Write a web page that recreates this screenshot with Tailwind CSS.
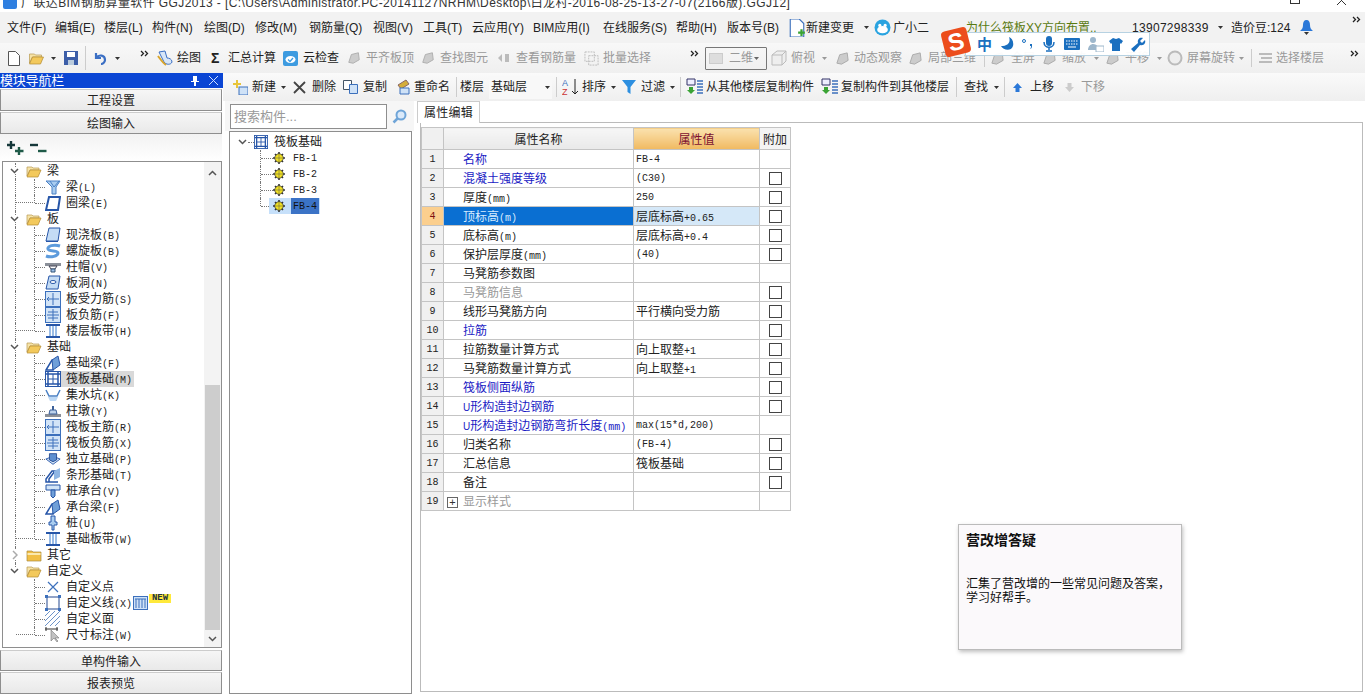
<!DOCTYPE html>
<html lang="zh">
<head>
<meta charset="utf-8">
<script src="https://cdn.jsdelivr.net/npm/@tailwindcss/browser@4"></script>
<title>GGJ2013</title>
</head>
<body class="relative w-[1365px] h-[697px] overflow-hidden bg-white text-[12px] leading-none text-[#222] font-['Liberation_Sans','Noto_Sans_CJK_SC',sans-serif]">
<svg width="0" height="0" class="absolute">
<defs>
<symbol id="fo" viewBox="0 0 16 14"><path d="M1 3h5l1 1h6v2H4L1 12z" fill="#f6e3a8" stroke="#b89a50" stroke-width=".7"/><path d="M4 6h11l-3 7H1z" fill="#f3c95c" stroke="#b18a30" stroke-width=".7"/></symbol>
<symbol id="fc" viewBox="0 0 16 14"><path d="M1 3h5l1 1h8v9H1z" fill="#f2bf45" stroke="#a98a40" stroke-width=".7"/><path d="M1.500 5h13v2h-13z" fill="#fbe9ae"/></symbol>
<symbol id="beam" viewBox="0 0 16 16"><path d="M1 2h14l-4 6v7H7V8z" fill="#a9cdf0" stroke="#4a80c4"/><path d="M5 2l4 6 5-6" fill="none" stroke="#4a80c4"/></symbol>
<symbol id="ring" viewBox="0 0 16 16"><path d="M4 2h11l-2 13H1z" fill="#fff" stroke="#2756a8" stroke-width="2"/></symbol>
<symbol id="slab" viewBox="0 0 16 16"><path d="M4 1h11l-2 13H1z" fill="#c4dcf5" stroke="#2756a8"/><path d="M1 14h12v1H1z" fill="#2756a8"/></symbol>
<symbol id="spiral" viewBox="0 0 16 16"><path d="M15 3C9 1 2 3 3 6c1 3 10 1 10 4s-7 5-12 3" fill="none" stroke="#5d9bdc" stroke-width="3"/></symbol>
<symbol id="cap" viewBox="0 0 16 16"><path d="M0 4h16v3H0z" fill="#8a8f98"/><path d="M4 7h8l-2 3H6z" fill="#fff" stroke="#445"/><path d="M6 10h4v3H6z" fill="#9cc0ea" stroke="#357"/></symbol>
<symbol id="hole" viewBox="0 0 16 16"><path d="M4 1h11l-2 13H1z" fill="#c4dcf5" stroke="#2756a8"/><ellipse cx="8" cy="7" rx="3" ry="1.500" fill="#fff" stroke="#2756a8"/></symbol>
<symbol id="g1" viewBox="0 0 16 16"><rect x=".5" y=".5" width="15" height="15" fill="#d2e4f7" stroke="#3c70bc"/><path d="M8 2v12M2 8h12M4 6l-2 2 2 2" fill="none" stroke="#3c70bc"/></symbol>
<symbol id="g2" viewBox="0 0 16 16"><rect x=".5" y=".5" width="15" height="15" fill="#d2e4f7" stroke="#3c70bc"/><path d="M8 2v12M2 8h12M3 5h10M3 11h10" fill="none" stroke="#3c70bc"/></symbol>
<symbol id="band" viewBox="0 0 16 16"><path d="M1 2h14M1 14h14" stroke="#2756a8" stroke-width="2"/><path d="M5 3v10M8 3v10M11 3v10" stroke="#7aa7de" stroke-width="1.500"/></symbol>
<symbol id="fbeam" viewBox="0 0 16 16"><path d="M1 15L7 5h4l-3 10z" fill="#fff" stroke="#2756a8" stroke-width="1.500"/><path d="M7 5l6-4 2 9-7 5z" fill="#6f9fd8" stroke="#2756a8"/></symbol>
<symbol id="raft" viewBox="0 0 16 16"><rect x=".5" y=".5" width="15" height="15" fill="#fff" stroke="#2756a8"/><path d="M3 1v14M13 1v14M1 3h14M1 13h14" stroke="#2756a8" stroke-width="1.500"/><path d="M8 3v10M3 8h10" stroke="#2756a8"/></symbol>
<symbol id="pit" viewBox="0 0 16 16"><path d="M1 3l3 6h8l3-6" fill="none" stroke="#4a80c4" stroke-width="1.500"/><path d="M3 10h10l-2 4H5z" fill="#bcd8f5"/></symbol>
<symbol id="pier" viewBox="0 0 16 16"><path d="M0 11h16v3H0z" fill="#8a8f98"/><path d="M5 7h6l1 4H4z" fill="#bcd2ec" stroke="#3c6099"/><path d="M7 3h2v4H7z" fill="#3c6099"/></symbol>
<symbol id="iso" viewBox="0 0 18 16"><path d="M1 8l8-3 8 3-8 6z" fill="#d2e4f7" stroke="#2756a8"/><path d="M5 2h8v7l-4 2-4-2z" fill="#5d8fd0" stroke="#24498f"/></symbol>
<symbol id="strip" viewBox="0 0 16 16"><path d="M1 15v-3L7 4h3L4 12v3zM1 15h12" fill="#fff" stroke="#2756a8" stroke-width="1.500"/><path d="M9 4l6-3v9l-6 3z" fill="#8fb6e4"/></symbol>
<symbol id="cap2" viewBox="0 0 16 16"><path d="M1 2h14v5H1z" fill="#d2e4f7" stroke="#2756a8"/><path d="M6 7h4v6l-2 2-2-2z" fill="#6f9fd8" stroke="#2756a8"/></symbol>
<symbol id="pile" viewBox="0 0 16 16"><path d="M6 1h4v6h2v3H9v5H7v-5H4V7h2z" fill="#a9cdf0" stroke="#2756a8"/></symbol>
<symbol id="x" viewBox="0 0 16 16"><path d="M3 3l10 10M13 3L3 13" stroke="#3c70bc" stroke-width="1.200"/></symbol>
<symbol id="line" viewBox="0 0 16 16"><rect x="2" y="2" width="12" height="12" fill="none" stroke="#24498f"/><path d="M0 0h3v3H0zM13 0h3v3h-3zM0 13h3v3H0zM13 13h3v3h-3z" fill="#3c70bc"/></symbol>
<symbol id="hatch" viewBox="0 0 16 16"><path d="M0 5L5 0M0 10L10 0M0 15L15 0M5 15L15 5M10 15l5-5" stroke="#6d93c8"/></symbol>
<symbol id="dim" viewBox="0 0 16 16"><path d="M0 2h13M1 0v4M12 0v4" stroke="#333"/><path d="M6 3v11l3-3 3 4 1-1-3-3h4z" fill="#c2c2c2" stroke="#777" stroke-width=".6"/></symbol>
<symbol id="gear" viewBox="0 0 12 12"><path d="M6 0v12M0 6h12M2 2l8 8M10 2l-8 8" stroke="#333" stroke-width="1.600"/><circle cx="6" cy="6" r="4.200" fill="#f0e020" stroke="#333" stroke-width=".8"/><path d="M3.500 6h5M6 3.500v5" stroke="#555" stroke-dasharray="1 1"/></symbol>
<symbol id="dn" viewBox="0 0 5 3"><path d="M0 0h5L2.500 3z" fill="currentColor"/></symbol>
<symbol id="more" viewBox="0 0 9 7"><path d="M1 1l2.500 2.500L1 6M5 1l2.500 2.500L5 6" fill="none" stroke="#222" stroke-width="1.300"/></symbol>
<symbol id="chev" viewBox="0 0 9 6"><path d="M1 1l3.500 3.500L8 1" fill="none" stroke="#555" stroke-width="1.500"/></symbol>
<symbol id="grey" viewBox="0 0 16 16"><path d="M2 13l3-9 8-2 1 8-7 4z" fill="#ccc" stroke="#aaa"/></symbol>
<symbol id="list" viewBox="0 0 18 18"><path d="M1 1h8v6H1z" fill="#eef" stroke="#336"/><path d="M3 9h4v3h2l-4 4-4-4h2z" fill="#3aa335"/><path d="M11 3h6M11 6h6M11 9h6M11 12h6M11 15h6" stroke="#3c70bc" stroke-width="1.500"/></symbol>
</defs>
</svg>

<header class="relative h-[12px] bg-white overflow-hidden">
  <div class="flex items-start -mt-[6px] h-[18px]">
    <span class="ml-[3px] mt-[1px] w-[14px] h-[14px] rounded-[2px] bg-[#2f7fe0]"></span>
    <span class="ml-[4px] text-[12px] leading-[18px] text-[#333] whitespace-nowrap tracking-[0.4px]">广联达BIM钢筋算量软件 GGJ2013 - [C:\Users\Administrator.PC-20141127NRHM\Desktop\白龙村-2016-08-25-13-27-07(2166版).GGJ12]</span>
  </div>
  <span class="absolute left-[1290px] -top-[6px] w-[10px] h-[10px] border border-[#333]"></span>
  <svg class="absolute left-[1337px] -top-[4px]" width="9" height="9"><path d="M0 0l9 9M9 0L0 9" stroke="#333"/></svg>
</header>

<nav class="flex items-center h-[31px] bg-[#f2f2f2] whitespace-nowrap">
  <span class="ml-[7px] w-[48px]">文件(F)</span><span class="w-[49px]">编辑(E)</span><span class="w-[48px]">楼层(L)</span><span class="w-[52px]">构件(N)</span><span class="w-[51px]">绘图(D)</span><span class="w-[54px]">修改(M)</span><span class="w-[64px]">钢筋量(Q)</span><span class="w-[50px]">视图(V)</span><span class="w-[49px]">工具(T)</span><span class="w-[61px]">云应用(Y)</span><span class="w-[70px]">BIM应用(I)</span><span class="w-[73px]">在线服务(S)</span><span class="w-[51px]">帮助(H)</span><span class="w-[61px]">版本号(B)</span>
  <svg class="w-[18px] h-[18px]" viewBox="0 0 16 16"><path d="M2 0h8l4 4v12H2z" fill="#fff" stroke="#3c70bc"/><path d="M9 11h2V9h2v2h2v2h-2v2h-2v-2H9z" fill="#3aa335"/></svg>
  <span class="w-[58px]">新建变更</span>
  <svg class="w-[5px] h-[3px] text-[#333]"><use href="#dn"/></svg>
  <svg class="ml-[5px] w-[17px] h-[17px]" viewBox="0 0 16 16"><circle cx="8" cy="8" r="7.500" fill="#29a3e0"/><ellipse cx="8" cy="10" rx="5" ry="3.500" fill="#fff"/><circle cx="5.500" cy="6" r="1.500" fill="#fff"/><circle cx="10.500" cy="6" r="1.500" fill="#fff"/></svg>
  <span class="ml-[2px] w-[73px]">广小二</span>
  <span class="w-[166px] text-[#5a7a10]">为什么筏板XY方向布置..</span>
  <span class="w-[86px] tracking-[0.3px]">13907298339</span>
  <svg class="w-[5px] h-[3px] text-[#333]"><use href="#dn"/></svg>
  <span class="ml-[8px] w-[69px]">造价豆:124</span>
  <svg class="w-[13px] h-[15px]" viewBox="0 0 13 15"><path d="M6.500 0C4 0 3 2 3 5c0 3-1 4-3 6h13c-2-2-3-3-3-6 0-3-1-5-3.500-5z" fill="#2b78d8"/><path d="M4 12h5l-2.500 3z" fill="#333"/></svg>
  <svg class="ml-[39px] -mt-[16px] w-[9px] h-[7px]"><use href="#more"/></svg>
</nav>

<div class="flex items-center h-[30px] bg-gradient-to-b from-[#f8f8f8] to-[#efefef] whitespace-nowrap text-[#999]">
  <span class="ml-[8px] w-[20px]"><svg class="w-[12px] h-[15px]" viewBox="0 0 12 15"><path d="M.5.500h7l4 4v10H.5z" fill="#fff" stroke="#555"/></svg></span>
  <span class="w-[23px]"><svg class="w-[17px] h-[14px]" viewBox="0 0 16 14"><use href="#fo"/></svg></span>
  <span class="w-[13px] text-[#333]"><svg class="block w-[5px] h-[3px]"><use href="#dn"/></svg></span>
  <span class="w-[21px]"><svg class="w-[14px] h-[14px]" viewBox="0 0 14 14"><path d="M0 0h14v14H0z" fill="#3c5ea8"/><path d="M3 1h8v5H3z" fill="#fff"/><path d="M4 9h6v5H4z" fill="#bcd"/></svg></span>
  <span class="w-[8px] h-[24px]"><span class="block w-px h-full bg-[#ccc]"></span></span>
  <span class="w-[22px]"><svg class="w-[14px] h-[13px]" viewBox="0 0 14 13"><path d="M3 1v5h5M3 6c3-4 9-3 9 2 0 2-2 4-4 4" fill="none" stroke="#3b6fc4" stroke-width="2.200"/></svg></span>
  <span class="w-[25px] text-[#333]"><svg class="block w-[5px] h-[3px]"><use href="#dn"/></svg></span>
  <span class="w-[17px] -mt-[10px]"><svg class="w-[9px] h-[7px]"><use href="#more"/></svg></span>
  <span class="w-[20px]"><svg class="w-[16px] h-[16px]" viewBox="0 0 16 16"><path d="M2 2l6-1 2 7c2 0 5 1 5 4-1 3-6 3-8 0z" fill="#d8e6f7" stroke="#3b6fc4"/><path d="M1 6c3 4 5 7 8 9" stroke="#d9a52c" stroke-width="2" fill="none"/></svg></span>
  <span class="w-[34px] text-[#222]">绘图</span>
  <span class="w-[17px] text-[#222] font-bold text-[14px]">Σ</span>
  <span class="w-[55px] text-[#222]">汇总计算</span>
  <span class="w-[20px]"><svg class="w-[15px] h-[15px]" viewBox="0 0 15 15"><rect width="15" height="15" rx="2" fill="#3d9be0"/><ellipse cx="7.500" cy="8.500" rx="5" ry="3.500" fill="#fff"/><path d="M5 8.500l2 2 3-3.500" fill="none" stroke="#3d9be0" stroke-width="1.300"/></svg></span>
  <span class="w-[44px] text-[#222]">云检查</span>
  <span class="w-[19px]"><svg class="w-[14px] h-[14px]"><use href="#grey"/></svg></span><span class="w-[55px]">平齐板顶</span>
  <span class="w-[19px]"><svg class="w-[14px] h-[14px]"><use href="#grey"/></svg></span><span class="w-[57px]">查找图元</span>
  <span class="w-[19px]"><svg class="w-[13px] h-[10px]" viewBox="0 0 13 10"><path d="M1 5l4-4v8zM8 1v8h4V1z" fill="#bbb"/></svg></span><span class="w-[68px]">查看钢筋量</span>
  <span class="w-[19px]"><svg class="w-[15px] h-[15px]" viewBox="0 0 16 16"><path d="M1 1h10v10H1zM5 5h10v10H5z" fill="none" stroke="#bbb" stroke-dasharray="2 1"/></svg></span><span class="w-[87px]">批量选择</span>
  <span class="w-[15px] -mt-[10px]"><svg class="w-[9px] h-[7px]"><use href="#more"/></svg></span>
  <span class="flex items-center w-[62px] h-[23px] border border-[#777] rounded-[1px]"><span class="ml-[3px] w-[14px] h-[11px] bg-[#ddd] border border-[#ccc]"></span><span class="ml-[6px] w-[25px]">二维</span><svg class="w-[5px] h-[3px] text-[#666]"><use href="#dn"/></svg></span>
  <span class="ml-[4px] w-[20px]"><svg class="w-[16px] h-[16px]" viewBox="0 0 16 16"><path d="M1 5l5-4h9v10l-4 4H1z" fill="#eee" stroke="#bbb"/><path d="M1 5h10v10M11 5l4-4" fill="none" stroke="#bbb"/></svg></span>
  <span class="w-[31px]">俯视</span>
  <span class="w-[13px]"><svg class="block w-[5px] h-[3px]"><use href="#dn"/></svg></span>
  <span class="w-[19px]"><svg class="w-[15px] h-[15px]"><use href="#grey"/></svg></span><span class="w-[54px]">动态观察</span>
  <span class="w-[20px]"><svg class="w-[15px] h-[15px]"><use href="#grey"/></svg></span><span class="w-[56px]">局部三维</span>
  <span class="w-[6px] h-[18px]"><span class="block w-px h-full bg-[#ccc]"></span></span>
  <span class="w-[21px]"><svg class="w-[15px] h-[15px]"><use href="#grey"/></svg></span><span class="w-[31px]">全屏</span>
  <span class="w-[20px]"><svg class="w-[15px] h-[15px]"><use href="#grey"/></svg></span><span class="w-[32px]">缩放</span>
  <span class="w-[11px]"><svg class="block w-[5px] h-[3px]"><use href="#dn"/></svg></span>
  <span class="w-[20px]"><svg class="w-[15px] h-[15px]"><use href="#grey"/></svg></span><span class="w-[32px]">平移</span>
  <span class="w-[10px]"><svg class="block w-[5px] h-[3px]"><use href="#dn"/></svg></span>
  <span class="w-[20px]"><svg class="w-[16px] h-[16px]" viewBox="0 0 16 16"><circle cx="8" cy="8" r="6.500" fill="#eee" stroke="#bbb" stroke-width="2"/></svg></span>
  <span class="w-[52px]">屏幕旋转</span>
  <span class="w-[12px]"><svg class="block w-[5px] h-[3px]"><use href="#dn"/></svg></span>
  <span class="w-[7px] h-[18px]"><span class="block w-px h-full bg-[#ccc]"></span></span>
  <span class="w-[18px]"><svg class="w-[15px] h-[13px]" viewBox="0 0 15 13"><path d="M1 2h13M3 6h11M1 10h13" stroke="#bbb" stroke-width="2"/></svg></span><span class="w-[74px]">选择楼层</span>
  <span class="-mt-[10px]"><svg class="w-[9px] h-[7px]"><use href="#more"/></svg></span>
</div>

<div class="flex h-[624px]">
  <aside class="w-[223px] shrink-0 flex flex-col">
    <div class="flex items-center h-[15px] bg-[#0a45d4] text-white text-[13px] tracking-[-0.2px]">
      <span class="flex-1">模块导航栏</span>
      <svg class="w-[8px] h-[10px] mr-[10px]" viewBox="0 0 8 10"><path d="M2 0h4v5h2v1H5v4H3V6H0V5h2z" fill="#fff"/></svg>
      <svg class="w-[9px] h-[9px] mr-[5px]" viewBox="0 0 9 9"><path d="M0 0l9 9M9 0L0 9" stroke="#cfe0ff"/></svg>
    </div>
    <div class="mt-px flex items-center justify-center h-[22px] pt-[2px] w-[222px] bg-gradient-to-b from-[#f6f6f6] to-[#e9e9e9] border border-[#8e8e8e] border-t-[#ccc]">工程设置</div>
    <div class="mt-px flex items-center justify-center h-[22px] pt-[2px] w-[222px] bg-gradient-to-b from-[#f6f6f6] to-[#e9e9e9] border border-[#8e8e8e] border-t-[#ccc]">绘图输入</div>
    <div class="flex items-center h-[27px] w-[222px] bg-gradient-to-b from-[#f2f2f2] to-white">
      <svg class="ml-[7px] w-[17px] h-[16px]" viewBox="0 0 17 16"><path d="M4 1v8M0 5h8" stroke="#16383a" stroke-width="2.400"/><path d="M12 7v8M8 11h8.500" stroke="#1f5a48" stroke-width="2.400"/></svg>
      <svg class="ml-[6px] w-[17px] h-[16px]" viewBox="0 0 17 16"><path d="M0 5h8" stroke="#16383a" stroke-width="2.400"/><path d="M8 11h8.500" stroke="#1f5a48" stroke-width="2.400"/></svg>
    </div>
    <div class="relative ml-[2px] w-[220px] h-[487px] border border-[#8e8e8e] bg-white overflow-hidden">
      <div class="pt-[1px] font-['Liberation_Mono','Noto_Sans_CJK_SC',monospace]">

        <div class="flex items-center h-4"><span class="relative w-[23px] h-full"><span class="absolute left-[12px] top-0 h-full border-l border-dotted border-[#777]"></span><svg class="absolute left-[7px] top-[5px] w-[9px] h-[6px] bg-white"><use href="#chev"/></svg></span><svg class="w-[16px] h-[14px]"><use href="#fo"/></svg><span class="ml-[5px] pt-[2px]">梁</span></div>
        <div class="flex items-center h-4"><span class="w-[13px] h-full border-r border-dotted border-[#777]"></span><span class="w-[19px] h-full border-r border-dotted border-[#777]"></span><span class="w-[10px] border-t border-dotted border-[#777]"></span><svg class="w-[16px] h-[16px]"><use href="#beam"/></svg><span class="ml-[5px] pt-[2px]">梁<span class="text-[10px]">(L)</span></span></div>
        <div class="flex items-center h-4"><span class="w-[13px] h-full border-r border-dotted border-[#777]"></span><span class="w-[19px] h-1/2 self-start border-r border-b border-dotted border-[#777]"></span><span class="w-[10px] border-t border-dotted border-[#777]"></span><svg class="w-[16px] h-[16px]"><use href="#ring"/></svg><span class="ml-[5px] pt-[2px]">圈梁<span class="text-[10px]">(E)</span></span></div>

        <div class="flex items-center h-4"><span class="relative w-[23px] h-full"><span class="absolute left-[12px] top-0 h-full border-l border-dotted border-[#777]"></span><svg class="absolute left-[7px] top-[5px] w-[9px] h-[6px] bg-white"><use href="#chev"/></svg></span><svg class="w-[16px] h-[14px]"><use href="#fo"/></svg><span class="ml-[5px] pt-[2px]">板</span></div>
        <div class="flex items-center h-4"><span class="w-[13px] h-full border-r border-dotted border-[#777]"></span><span class="w-[19px] h-full border-r border-dotted border-[#777]"></span><span class="w-[10px] border-t border-dotted border-[#777]"></span><svg class="w-[16px] h-[16px]"><use href="#slab"/></svg><span class="ml-[5px] pt-[2px]">现浇板<span class="text-[10px]">(B)</span></span></div>
        <div class="flex items-center h-4"><span class="w-[13px] h-full border-r border-dotted border-[#777]"></span><span class="w-[19px] h-full border-r border-dotted border-[#777]"></span><span class="w-[10px] border-t border-dotted border-[#777]"></span><svg class="w-[16px] h-[16px]"><use href="#spiral"/></svg><span class="ml-[5px] pt-[2px]">螺旋板<span class="text-[10px]">(B)</span></span></div>
        <div class="flex items-center h-4"><span class="w-[13px] h-full border-r border-dotted border-[#777]"></span><span class="w-[19px] h-full border-r border-dotted border-[#777]"></span><span class="w-[10px] border-t border-dotted border-[#777]"></span><svg class="w-[16px] h-[16px]"><use href="#cap"/></svg><span class="ml-[5px] pt-[2px]">柱帽<span class="text-[10px]">(V)</span></span></div>
        <div class="flex items-center h-4"><span class="w-[13px] h-full border-r border-dotted border-[#777]"></span><span class="w-[19px] h-full border-r border-dotted border-[#777]"></span><span class="w-[10px] border-t border-dotted border-[#777]"></span><svg class="w-[16px] h-[16px]"><use href="#hole"/></svg><span class="ml-[5px] pt-[2px]">板洞<span class="text-[10px]">(N)</span></span></div>
        <div class="flex items-center h-4"><span class="w-[13px] h-full border-r border-dotted border-[#777]"></span><span class="w-[19px] h-full border-r border-dotted border-[#777]"></span><span class="w-[10px] border-t border-dotted border-[#777]"></span><svg class="w-[16px] h-[16px]"><use href="#g1"/></svg><span class="ml-[5px] pt-[2px]">板受力筋<span class="text-[10px]">(S)</span></span></div>
        <div class="flex items-center h-4"><span class="w-[13px] h-full border-r border-dotted border-[#777]"></span><span class="w-[19px] h-full border-r border-dotted border-[#777]"></span><span class="w-[10px] border-t border-dotted border-[#777]"></span><svg class="w-[16px] h-[16px]"><use href="#g2"/></svg><span class="ml-[5px] pt-[2px]">板负筋<span class="text-[10px]">(F)</span></span></div>
        <div class="flex items-center h-4"><span class="w-[13px] h-full border-r border-dotted border-[#777]"></span><span class="w-[19px] h-1/2 self-start border-r border-b border-dotted border-[#777]"></span><span class="w-[10px] border-t border-dotted border-[#777]"></span><svg class="w-[16px] h-[16px]"><use href="#band"/></svg><span class="ml-[5px] pt-[2px]">楼层板带<span class="text-[10px]">(H)</span></span></div>

        <div class="flex items-center h-4"><span class="relative w-[23px] h-full"><span class="absolute left-[12px] top-0 h-full border-l border-dotted border-[#777]"></span><svg class="absolute left-[7px] top-[5px] w-[9px] h-[6px] bg-white"><use href="#chev"/></svg></span><svg class="w-[16px] h-[14px]"><use href="#fo"/></svg><span class="ml-[5px] pt-[2px]">基础</span></div>
        <div class="flex items-center h-4"><span class="w-[13px] h-full border-r border-dotted border-[#777]"></span><span class="w-[19px] h-full border-r border-dotted border-[#777]"></span><span class="w-[10px] border-t border-dotted border-[#777]"></span><svg class="w-[16px] h-[16px]"><use href="#fbeam"/></svg><span class="ml-[5px] pt-[2px]">基础梁<span class="text-[10px]">(F)</span></span></div>
        <div class="flex items-center h-4"><span class="w-[13px] h-full border-r border-dotted border-[#777]"></span><span class="w-[19px] h-full border-r border-dotted border-[#777]"></span><span class="w-[10px] border-t border-dotted border-[#777]"></span><span class="flex items-center h-full pr-[2px] bg-[#d9d9d9]"><svg class="w-[16px] h-[16px]"><use href="#raft"/></svg><span class="ml-[5px] pt-[2px]">筏板基础<span class="text-[10px]">(M)</span></span></span></div>
        <div class="flex items-center h-4"><span class="w-[13px] h-full border-r border-dotted border-[#777]"></span><span class="w-[19px] h-full border-r border-dotted border-[#777]"></span><span class="w-[10px] border-t border-dotted border-[#777]"></span><svg class="w-[16px] h-[16px]"><use href="#pit"/></svg><span class="ml-[5px] pt-[2px]">集水坑<span class="text-[10px]">(K)</span></span></div>
        <div class="flex items-center h-4"><span class="w-[13px] h-full border-r border-dotted border-[#777]"></span><span class="w-[19px] h-full border-r border-dotted border-[#777]"></span><span class="w-[10px] border-t border-dotted border-[#777]"></span><svg class="w-[16px] h-[16px]"><use href="#pier"/></svg><span class="ml-[5px] pt-[2px]">柱墩<span class="text-[10px]">(Y)</span></span></div>
        <div class="flex items-center h-4"><span class="w-[13px] h-full border-r border-dotted border-[#777]"></span><span class="w-[19px] h-full border-r border-dotted border-[#777]"></span><span class="w-[10px] border-t border-dotted border-[#777]"></span><svg class="w-[16px] h-[16px]"><use href="#g1"/></svg><span class="ml-[5px] pt-[2px]">筏板主筋<span class="text-[10px]">(R)</span></span></div>
        <div class="flex items-center h-4"><span class="w-[13px] h-full border-r border-dotted border-[#777]"></span><span class="w-[19px] h-full border-r border-dotted border-[#777]"></span><span class="w-[10px] border-t border-dotted border-[#777]"></span><svg class="w-[16px] h-[16px]"><use href="#g2"/></svg><span class="ml-[5px] pt-[2px]">筏板负筋<span class="text-[10px]">(X)</span></span></div>
        <div class="flex items-center h-4"><span class="w-[13px] h-full border-r border-dotted border-[#777]"></span><span class="w-[19px] h-full border-r border-dotted border-[#777]"></span><span class="w-[10px] border-t border-dotted border-[#777]"></span><svg class="w-[16px] h-[16px]"><use href="#iso"/></svg><span class="ml-[5px] pt-[2px]">独立基础<span class="text-[10px]">(P)</span></span></div>
        <div class="flex items-center h-4"><span class="w-[13px] h-full border-r border-dotted border-[#777]"></span><span class="w-[19px] h-full border-r border-dotted border-[#777]"></span><span class="w-[10px] border-t border-dotted border-[#777]"></span><svg class="w-[16px] h-[16px]"><use href="#strip"/></svg><span class="ml-[5px] pt-[2px]">条形基础<span class="text-[10px]">(T)</span></span></div>
        <div class="flex items-center h-4"><span class="w-[13px] h-full border-r border-dotted border-[#777]"></span><span class="w-[19px] h-full border-r border-dotted border-[#777]"></span><span class="w-[10px] border-t border-dotted border-[#777]"></span><svg class="w-[16px] h-[16px]"><use href="#cap2"/></svg><span class="ml-[5px] pt-[2px]">桩承台<span class="text-[10px]">(V)</span></span></div>
        <div class="flex items-center h-4"><span class="w-[13px] h-full border-r border-dotted border-[#777]"></span><span class="w-[19px] h-full border-r border-dotted border-[#777]"></span><span class="w-[10px] border-t border-dotted border-[#777]"></span><svg class="w-[16px] h-[16px]"><use href="#fbeam"/></svg><span class="ml-[5px] pt-[2px]">承台梁<span class="text-[10px]">(F)</span></span></div>
        <div class="flex items-center h-4"><span class="w-[13px] h-full border-r border-dotted border-[#777]"></span><span class="w-[19px] h-full border-r border-dotted border-[#777]"></span><span class="w-[10px] border-t border-dotted border-[#777]"></span><svg class="w-[16px] h-[16px]"><use href="#pile"/></svg><span class="ml-[5px] pt-[2px]">桩<span class="text-[10px]">(U)</span></span></div>
        <div class="flex items-center h-4"><span class="w-[13px] h-full border-r border-dotted border-[#777]"></span><span class="w-[19px] h-1/2 self-start border-r border-b border-dotted border-[#777]"></span><span class="w-[10px] border-t border-dotted border-[#777]"></span><svg class="w-[16px] h-[16px]"><use href="#band"/></svg><span class="ml-[5px] pt-[2px]">基础板带<span class="text-[10px]">(W)</span></span></div>

        <div class="flex items-center h-4"><span class="relative w-[23px] h-full"><span class="absolute left-[12px] top-0 h-full border-l border-dotted border-[#777]"></span><svg class="absolute left-[9px] top-[3px] w-[6px] h-[10px] bg-white" viewBox="0 0 6 10"><path d="M1 1l4 4-4 4" fill="none" stroke="#aaa" stroke-width="1.500"/></svg></span><svg class="w-[16px] h-[14px]"><use href="#fc"/></svg><span class="ml-[5px] pt-[2px]">其它</span></div>
        <div class="flex items-center h-4"><span class="relative w-[23px] h-full"><span class="absolute left-[12px] top-0 h-1/2 border-l border-dotted border-[#777]"></span><svg class="absolute left-[7px] top-[5px] w-[9px] h-[6px] bg-white"><use href="#chev"/></svg></span><svg class="w-[16px] h-[14px]"><use href="#fo"/></svg><span class="ml-[5px] pt-[2px]">自定义</span></div>
        <div class="flex items-center h-4"><span class="w-[13px] h-full"></span><span class="w-[19px] h-full border-r border-dotted border-[#777]"></span><span class="w-[10px] border-t border-dotted border-[#777]"></span><svg class="w-[16px] h-[16px]"><use href="#x"/></svg><span class="ml-[5px] pt-[2px]">自定义点</span></div>
        <div class="flex items-center h-4"><span class="w-[13px] h-full"></span><span class="w-[19px] h-full border-r border-dotted border-[#777]"></span><span class="w-[10px] border-t border-dotted border-[#777]"></span><svg class="w-[16px] h-[16px]"><use href="#line"/></svg><span class="ml-[5px] pt-[2px]">自定义线<span class="text-[10px]">(X)</span></span><svg class="ml-[1px] w-[15px] h-[14px]" viewBox="0 0 15 14"><rect x=".5" y=".5" width="14" height="13" fill="#cfe2f7" stroke="#3c70bc"/><path d="M3 3v9M6 3v9M9 3v9M12 3v9" stroke="#3c70bc"/><path d="M2 3h11" stroke="#3c70bc"/></svg><span class="self-start -mt-[1px] ml-px h-[9px] w-[22px] text-center bg-[#ffe93b] text-[9px] leading-[9px] font-bold text-[#234]">NEW</span></div>
        <div class="flex items-center h-4"><span class="w-[13px] h-full"></span><span class="w-[19px] h-full border-r border-dotted border-[#777]"></span><span class="w-[10px] border-t border-dotted border-[#777]"></span><svg class="w-[16px] h-[16px]"><use href="#hatch"/></svg><span class="ml-[5px] pt-[2px]">自定义面</span></div>
        <div class="flex items-center h-4"><span class="w-[13px] h-full"></span><span class="w-[19px] h-1/2 self-start border-r border-b border-dotted border-[#777]"></span><span class="w-[10px] border-t border-dotted border-[#777]"></span><svg class="w-[16px] h-[16px]"><use href="#dim"/></svg><span class="ml-[5px] pt-[2px]">尺寸标注<span class="text-[10px]">(W)</span></span></div>
      </div>
      <div class="absolute right-0 top-0 w-[17px] h-full flex flex-col bg-[#f3f3f3]">
        <svg class="mt-[8px] mx-auto w-[9px] h-[6px] rotate-180"><use href="#chev"/></svg>
        <div class="mt-[209px] mx-auto w-[15px] h-[245px] bg-[#cdcdcd]"></div>
        <svg class="mt-[6px] mx-auto w-[9px] h-[6px]"><use href="#chev"/></svg>
      </div>
    </div>
    <div class="mt-[2px] flex items-center justify-center h-[21px] pt-[2px] w-[222px] bg-gradient-to-b from-[#f6f6f6] to-[#e9e9e9] border border-[#8e8e8e] border-t-[#ccc]">单构件输入</div>
    <div class="mt-px flex items-center justify-center h-[22px] pt-[2px] w-[222px] bg-gradient-to-b from-[#f6f6f6] to-[#e9e9e9] border border-[#8e8e8e] border-t-[#ccc]">报表预览</div>
  </aside>

  <main class="flex-1 flex flex-col min-w-0">
    <div class="flex items-center h-[28px] bg-gradient-to-b from-[#fafafa] to-[#efefef] whitespace-nowrap">
      <span class="ml-[10px] w-[19px]"><svg class="w-[15px] h-[15px]" viewBox="0 0 15 15"><path d="M3 0v3H0v2h3v3h2V5h3V3H5V0z" fill="#e8c53a"/><rect x="6" y="7" width="9" height="8" fill="#cfe2f7" stroke="#3c70bc"/></svg></span>
      <span class="w-[29px]">新建</span><span class="w-[12px]"><svg class="block w-[5px] h-[3px] text-[#333]"><use href="#dn"/></svg></span>
      <span class="w-[19px]"><svg class="w-[13px] h-[13px]" viewBox="0 0 13 13"><path d="M1 1l11 11M12 1L1 12" stroke="#444" stroke-width="1.800"/></svg></span><span class="w-[31px]">删除</span>
      <span class="w-[20px]"><svg class="w-[15px] h-[14px]" viewBox="0 0 15 14"><path d="M.5.500h8v9h-8z" fill="#fff" stroke="#456"/><path d="M6.500 4.500h8v9h-8z" fill="#cfe2f7" stroke="#3c70bc"/></svg></span><span class="w-[31px]">复制</span>
      <span class="w-[20px]"><svg class="w-[16px] h-[16px]" viewBox="0 0 16 16"><path d="M4 6l8-5 3 4-8 5z" fill="#d4ad3a" stroke="#866"/><path d="M6 9h9v6H6z" fill="#cfe2f7" stroke="#3c70bc"/></svg></span><span class="w-[42px]">重命名</span>
      <span class="w-[4px] h-[20px]"><span class="block w-px h-full bg-[#ccc]"></span></span>
      <span class="w-[29px]">楼层</span>
      <span class="flex items-center w-[63px] h-[23px] bg-[#f8f8f8] pl-[2px]"><span class="w-[54px]">基础层</span><svg class="w-[5px] h-[3px] text-[#333]"><use href="#dn"/></svg></span>
      <span class="ml-[4px] w-[6px] h-[20px]"><span class="block w-px h-full bg-[#ccc]"></span></span>
      <span class="w-[20px]"><svg class="w-[18px] h-[18px]" viewBox="0 0 18 18"><text x="0" y="8" font-size="9" fill="#3c70bc" font-family="Liberation Sans">A</text><text x="0" y="17" font-size="9" fill="#c33" font-family="Liberation Sans">Z</text><path d="M13 1v15M10 13l3 3 3-3" fill="none" stroke="#222"/></svg></span>
      <span class="w-[29px]">排序</span><span class="w-[11px]"><svg class="block w-[5px] h-[3px] text-[#333]"><use href="#dn"/></svg></span>
      <span class="w-[19px]"><svg class="w-[14px] h-[14px]" viewBox="0 0 14 14"><path d="M0 0h14L8.500 7v7l-3-2V7z" fill="#2d8fe0"/></svg></span>
      <span class="w-[29px]">过滤</span><span class="w-[10px]"><svg class="block w-[5px] h-[3px] text-[#333]"><use href="#dn"/></svg></span>
      <span class="w-[6px] h-[20px]"><span class="block w-px h-full bg-[#ccc]"></span></span>
      <span class="w-[20px]"><svg class="w-[18px] h-[18px]"><use href="#list"/></svg></span>
      <span class="w-[115px]">从其他楼层复制构件</span>
      <span class="w-[20px]"><svg class="w-[18px] h-[18px]"><use href="#list"/></svg></span>
      <span class="w-[115px]">复制构件到其他楼层</span>
      <span class="w-[8px] h-[20px]"><span class="block w-px h-full bg-[#ccc]"></span></span>
      <span class="w-[30px]">查找</span><span class="w-[10px]"><svg class="block w-[5px] h-[3px] text-[#333]"><use href="#dn"/></svg></span>
      <span class="w-[9px] h-[20px]"><span class="block w-px h-full bg-[#ccc]"></span></span>
      <span class="w-[17px]"><svg class="w-[9px] h-[9px]" viewBox="0 0 9 9"><path d="M4.500 0L9 5H6.500v4h-4V5H0z" fill="#2b78d8"/></svg></span>
      <span class="w-[35px]">上移</span>
      <span class="w-[16px]"><svg class="w-[9px] h-[9px]" viewBox="0 0 9 9"><path d="M4.500 9L9 4H6.500V0h-4v4H0z" fill="#ccc"/></svg></span>
      <span class="text-[#999]">下移</span>
    </div>

    <div class="flex flex-1 min-h-0">
      <section class="w-[189px] ml-[2px] shrink-0 flex flex-col">
        <div class="flex items-center h-[30px] bg-[#f6f6f6]">
          <span class="ml-[5px] flex items-center w-[157px] h-[25px] bg-white border border-[#8e8e8e] pl-[3px] text-[#999] text-[13px]">搜索构件...</span>
          <svg class="ml-[5px] w-[15px] h-[15px]" viewBox="0 0 15 15"><circle cx="9" cy="6" r="4.500" fill="#dbeafa" stroke="#6fa5d8" stroke-width="2"/><path d="M5.500 9.500L1.500 13.500" stroke="#6fa5d8" stroke-width="2.500"/></svg>
        </div>
        <div class="ml-[4px] w-[183px] h-[563px] border border-[#8e8e8e] bg-white pt-[2px] font-['Liberation_Mono','Noto_Sans_CJK_SC',monospace]">
          <div class="flex items-center h-4"><svg class="ml-[8px] w-[9px] h-[6px]"><use href="#chev"/></svg><span class="ml-[1px] w-[6px] border-t border-dotted border-[#777]"></span><svg class="w-[14px] h-[14px]"><use href="#raft"/></svg><span class="ml-[6px] pt-[2px]">筏板基础</span></div>
          <div class="flex items-center h-4"><span class="ml-[30px] w-px h-full border-l border-dotted border-[#777]"></span><span class="w-[12px] border-t border-dotted border-[#777]"></span><svg class="w-[12px] h-[12px]"><use href="#gear"/></svg><span class="ml-[8px] pt-[2px] text-[10px]">FB-1</span></div>
          <div class="flex items-center h-4"><span class="ml-[30px] w-px h-full border-l border-dotted border-[#777]"></span><span class="w-[12px] border-t border-dotted border-[#777]"></span><svg class="w-[12px] h-[12px]"><use href="#gear"/></svg><span class="ml-[8px] pt-[2px] text-[10px]">FB-2</span></div>
          <div class="flex items-center h-4"><span class="ml-[30px] w-px h-full border-l border-dotted border-[#777]"></span><span class="w-[12px] border-t border-dotted border-[#777]"></span><svg class="w-[12px] h-[12px]"><use href="#gear"/></svg><span class="ml-[8px] pt-[2px] text-[10px]">FB-3</span></div>
          <div class="flex items-center h-4"><span class="ml-[30px] w-px h-1/2 self-start border-l border-b border-dotted border-[#777]"></span><span class="w-[8px] border-t border-dotted border-[#777]"></span><span class="flex items-center h-full bg-[#c6e0fa] pl-[4px]"><svg class="w-[12px] h-[12px]"><use href="#gear"/></svg><span class="ml-[6px] flex items-center h-full px-[2px] pt-[2px] bg-[#3b73c6] text-[10px] text-[#111]">FB-4</span><span class="w-[1px]"></span></span></div>
        </div>
      </section>
      <section class="flex-1 flex flex-col ml-[3px] mr-[2px] min-w-0">
        <div class="flex h-[21px]"><span class="flex items-center justify-center w-[63px] h-[22px] relative z-10 bg-white border border-b-0 border-[#ccc] tracking-[0.3px]">属性编辑</span></div>
        <div class="ml-[3px] h-[570px] border border-[#bbb] bg-white relative">
          <table class="table-fixed border-collapse mt-[4px] w-[369px]">
            <colgroup><col class="w-[22px]"><col class="w-[190px]"><col class="w-[126px]"><col class="w-[31px]"></colgroup>
            <thead>
              <tr class="h-[22px]"><th class="border border-[#c4c4c4] bg-[#f0f0f0] font-normal"></th><th class="border border-[#c4c4c4] bg-gradient-to-b from-[#f6f6f6] to-[#e9e9e9] font-normal pt-[2px]">属性名称</th><th class="border border-[#c4c4c4] bg-gradient-to-b from-[#fae2ae] to-[#f0b95f] font-normal pt-[2px] text-[#7c1030]">属性值</th><th class="border border-[#c4c4c4] bg-[#f4f4f4] font-normal pt-[2px]">附加</th></tr>
            </thead>
            <tbody class="[&_td]:border [&_td]:border-[#c4c4c4] [&_td]:h-[19px] [&_td:nth-child(-n+3)]:pt-[2px] [&_td:first-child]:font-['Liberation_Mono',monospace]">
              <tr><td class="bg-[#f0f0f0] text-center text-[10px]">1</td><td class="pl-[19px] text-[#1a1ac4]">名称</td><td class="pl-[2px] text-[10px] font-['Liberation_Mono',monospace]">FB-4</td><td></td></tr>
              <tr><td class="bg-[#f0f0f0] text-center text-[10px]">2</td><td class="pl-[19px] text-[#1a1ac4]">混凝土强度等级</td><td class="pl-[2px] text-[10px] font-['Liberation_Mono',monospace]">(C30)</td><td><span class="block mx-auto w-[13px] h-[13px] border border-[#444] bg-white"></span></td></tr>
              <tr><td class="bg-[#f0f0f0] text-center text-[10px]">3</td><td class="pl-[19px]">厚度<span class="text-[10px] font-['Liberation_Mono',monospace]">(mm)</span></td><td class="pl-[2px] text-[10px] font-['Liberation_Mono',monospace]">250</td><td><span class="block mx-auto w-[13px] h-[13px] border border-[#444] bg-white"></span></td></tr>
              <tr><td class="bg-[#fbcf8e] text-center text-[10px] text-[#7c1010]">4</td><td class="pl-[19px] bg-[#0a6fd2] text-[#d8ecff]">顶标高<span class="text-[10px] font-['Liberation_Mono',monospace]">(m)</span></td><td class="pl-[2px] bg-[#d5e8f8]">层底标高<span class="text-[10px] font-['Liberation_Mono',monospace]">+0.65</span></td><td><span class="block mx-auto w-[13px] h-[13px] border border-[#444] bg-white"></span></td></tr>
              <tr><td class="bg-[#f0f0f0] text-center text-[10px]">5</td><td class="pl-[19px]">底标高<span class="text-[10px] font-['Liberation_Mono',monospace]">(m)</span></td><td class="pl-[2px]">层底标高<span class="text-[10px] font-['Liberation_Mono',monospace]">+0.4</span></td><td><span class="block mx-auto w-[13px] h-[13px] border border-[#444] bg-white"></span></td></tr>
              <tr><td class="bg-[#f0f0f0] text-center text-[10px]">6</td><td class="pl-[19px]">保护层厚度<span class="text-[10px] font-['Liberation_Mono',monospace]">(mm)</span></td><td class="pl-[2px] text-[10px] font-['Liberation_Mono',monospace]">(40)</td><td><span class="block mx-auto w-[13px] h-[13px] border border-[#444] bg-white"></span></td></tr>
              <tr><td class="bg-[#f0f0f0] text-center text-[10px]">7</td><td class="pl-[19px]">马凳筋参数图</td><td></td><td></td></tr>
              <tr><td class="bg-[#f0f0f0] text-center text-[10px]">8</td><td class="pl-[19px] text-[#999]">马凳筋信息</td><td></td><td><span class="block mx-auto w-[13px] h-[13px] border border-[#444] bg-white"></span></td></tr>
              <tr><td class="bg-[#f0f0f0] text-center text-[10px]">9</td><td class="pl-[19px]">线形马凳筋方向</td><td class="pl-[2px]">平行横向受力筋</td><td><span class="block mx-auto w-[13px] h-[13px] border border-[#444] bg-white"></span></td></tr>
              <tr><td class="bg-[#f0f0f0] text-center text-[10px]">10</td><td class="pl-[19px] text-[#1a1ac4]">拉筋</td><td></td><td><span class="block mx-auto w-[13px] h-[13px] border border-[#444] bg-white"></span></td></tr>
              <tr><td class="bg-[#f0f0f0] text-center text-[10px]">11</td><td class="pl-[19px]">拉筋数量计算方式</td><td class="pl-[2px]">向上取整<span class="text-[10px] font-['Liberation_Mono',monospace]">+1</span></td><td><span class="block mx-auto w-[13px] h-[13px] border border-[#444] bg-white"></span></td></tr>
              <tr><td class="bg-[#f0f0f0] text-center text-[10px]">12</td><td class="pl-[19px]">马凳筋数量计算方式</td><td class="pl-[2px]">向上取整<span class="text-[10px] font-['Liberation_Mono',monospace]">+1</span></td><td><span class="block mx-auto w-[13px] h-[13px] border border-[#444] bg-white"></span></td></tr>
              <tr><td class="bg-[#f0f0f0] text-center text-[10px]">13</td><td class="pl-[19px] text-[#1a1ac4]">筏板侧面纵筋</td><td></td><td><span class="block mx-auto w-[13px] h-[13px] border border-[#444] bg-white"></span></td></tr>
              <tr><td class="bg-[#f0f0f0] text-center text-[10px]">14</td><td class="pl-[19px] text-[#1a1ac4]"><span class="text-[10px]">U</span>形构造封边钢筋</td><td></td><td><span class="block mx-auto w-[13px] h-[13px] border border-[#444] bg-white"></span></td></tr>
              <tr><td class="bg-[#f0f0f0] text-center text-[10px]">15</td><td class="pl-[19px] text-[#1a1ac4] whitespace-nowrap"><span class="text-[10px]">U</span>形构造封边钢筋弯折长度<span class="text-[10px] font-['Liberation_Mono',monospace]">(mm)</span></td><td class="pl-[2px] text-[10px] font-['Liberation_Mono',monospace]">max(15*d,200)</td><td></td></tr>
              <tr><td class="bg-[#f0f0f0] text-center text-[10px]">16</td><td class="pl-[19px]">归类名称</td><td class="pl-[2px] text-[10px] font-['Liberation_Mono',monospace]">(FB-4)</td><td><span class="block mx-auto w-[13px] h-[13px] border border-[#444] bg-white"></span></td></tr>
              <tr><td class="bg-[#f0f0f0] text-center text-[10px]">17</td><td class="pl-[19px]">汇总信息</td><td class="pl-[2px]">筏板基础</td><td><span class="block mx-auto w-[13px] h-[13px] border border-[#444] bg-white"></span></td></tr>
              <tr><td class="bg-[#f0f0f0] text-center text-[10px]">18</td><td class="pl-[19px]">备注</td><td></td><td><span class="block mx-auto w-[13px] h-[13px] border border-[#444] bg-white"></span></td></tr>
              <tr><td class="bg-[#f0f0f0] text-center text-[10px]">19</td><td class="text-[#999]"><span class="inline-flex items-center justify-center align-middle ml-[3px] mr-[5px] w-[11px] h-[11px] border border-[#666] text-[#333] text-[11px]">+</span>显示样式</td><td></td><td></td></tr>
            </tbody>
          </table>
          <div class="absolute left-[537px] top-[401px] w-[224px] h-[126px] bg-[#fbf9fb] border border-[#bbb] shadow-[1px_2px_4px_rgba(0,0,0,0.25)] px-[7px] pt-[7px]">
            <h2 class="text-[14px] leading-[16px] font-bold text-[#111]">营改增答疑</h2>
            <p class="mt-[29px] w-[208px] leading-[14px] text-[#111]">汇集了营改增的一些常见问题及答案，学习好帮手。</p>
          </div>
        </div>
      </section>
    </div>
  </main>
</div>

<div class="absolute left-[965px] top-[32px] flex items-center w-[185px] h-[24px] bg-white/95 border border-[#b7d2e2] text-[#1a6fbf]">
  <span class="ml-[11px] w-[23px] text-[15px] font-bold">中</span>
  <svg class="w-[14px] h-[14px]" viewBox="0 0 14 14"><path d="M9 0c2 5-1 9-8 9 2 4 10 6 12 0 1-4-1-8-4-9z" fill="#1a6fbf"/></svg>
  <svg class="ml-[8px] w-[11px] h-[11px]" viewBox="0 0 11 11"><circle cx="2" cy="2" r="1.500" fill="none" stroke="#1a6fbf"/><path d="M8 5h2v2c0 2-1 3-2 3 1-1 1-2 1-3H8z" fill="#1a6fbf"/></svg>
  <svg class="ml-[10px] w-[12px] h-[16px]" viewBox="0 0 12 16"><rect x="3" width="6" height="10" rx="3" fill="#1a6fbf"/><path d="M1 6c0 7 10 7 10 0M6 11v3M3 15h6" fill="none" stroke="#1a6fbf" stroke-width="1.500"/></svg>
  <svg class="ml-[9px] w-[16px] h-[12px]" viewBox="0 0 16 12"><rect width="16" height="12" rx="1" fill="#1a6fbf"/><path d="M2 3h12M2 6h12" stroke="#fff" stroke-dasharray="1.500 1"/><path d="M4 9h8" stroke="#fff"/></svg>
  <svg class="ml-[8px] w-[16px] h-[15px]" viewBox="0 0 16 15"><circle cx="5" cy="3" r="3" fill="#9db7cc"/><path d="M0 13c0-4 3-6 5-6s4 1 5 3v3z" fill="#9db7cc"/><rect x="8" y="9" width="8" height="6" fill="#fff" stroke="#9db7cc"/></svg>
  <svg class="ml-[5px] w-[14px] h-[13px]" viewBox="0 0 14 13"><path d="M4 0l3 1 3-1 4 3-2 3-1-1v8H3V5L2 6 0 3z" fill="#1a6fbf"/></svg>
  <svg class="ml-[8px] w-[15px] h-[15px]" viewBox="0 0 15 15"><path d="M14 3l-3 3-2-2 3-3c-3-1-6 1-5 5L0 12l3 3 6-7c4 1 6-2 5-5z" fill="#1a6fbf"/></svg>
</div>
<div class="absolute left-[943px] top-[29px] flex items-center justify-center w-[26px] h-[26px] rounded-[4px] bg-[#ec4d1c] -rotate-[14deg] text-white text-[24px] font-black leading-none font-['Liberation_Sans',sans-serif]">S</div>
</body>
</html>
